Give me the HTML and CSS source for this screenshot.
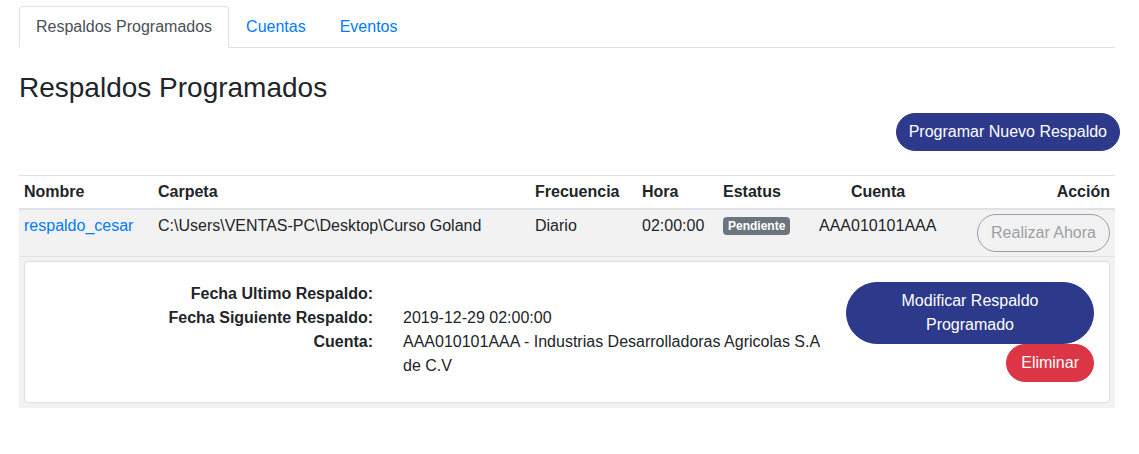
FILE: index.html
```html
<!DOCTYPE html>
<html lang="es">
<head>
<meta charset="utf-8">
<title>Respaldos Programados</title>
<link rel="stylesheet" href="styles.css">
</head>
<body>
<div class="page">
  <ul class="tabs">
    <li><a class="tab active" href="#">Respaldos Programados</a></li>
    <li><a class="tab" href="#">Cuentas</a></li>
    <li><a class="tab" href="#">Eventos</a></li>
  </ul>

  <h3 class="title">Respaldos Programados</h3>

  <div class="toolbar">
    <button class="btn btn-primary btn-new">Programar Nuevo Respaldo</button>
  </div>

  <table class="table">
    <colgroup>
      <col class="c1"><col class="c2"><col class="c3"><col class="c4"><col class="c5"><col class="c6"><col class="c7">
    </colgroup>
    <thead>
      <tr>
        <th>Nombre</th>
        <th>Carpeta</th>
        <th>Frecuencia</th>
        <th>Hora</th>
        <th>Estatus</th>
        <th class="center">Cuenta</th>
        <th class="right">Acción</th>
      </tr>
    </thead>
    <tbody>
      <tr class="striped">
        <td><a class="link" href="#">respaldo_cesar</a></td>
        <td>C:\Users\VENTAS-PC\Desktop\Curso Goland</td>
        <td>Diario</td>
        <td>02:00:00</td>
        <td><span class="badge">Pendiente</span></td>
        <td>AAA010101AAA</td>
        <td class="right"><button class="btn btn-outline" disabled>Realizar Ahora</button></td>
      </tr>
      <tr class="detail">
        <td colspan="7">
          <div class="card">
            <div class="labels">
              <div>Fecha Ultimo Respaldo:</div>
              <div>Fecha Siguiente Respaldo:</div>
              <div>Cuenta:</div>
            </div>
            <div class="values">
              <div class="empty"></div>
              <div>2019-12-29 02:00:00</div>
              <div>AAA010101AAA - Industrias Desarrolladoras Agricolas S.A de C.V</div>
            </div>
            <div class="actions">
              <button class="btn btn-primary btn-block">Modificar Respaldo Programado</button>
              <button class="btn btn-danger">Eliminar</button>
            </div>
          </div>
        </td>
      </tr>
    </tbody>
  </table>
</div>
</body>
</html>
```

FILE: styles.css
```css
* { box-sizing: border-box; }

html, body {
  margin: 0;
  padding: 0;
  background: #fff;
}

body {
  font-family: "Liberation Sans", Arial, sans-serif;
  font-size: 16px;
  line-height: 24px;
  color: #212529;
}

.page {
  padding: 6px 24px 0 19px;
}

.tabs {
  list-style: none;
  margin: 0;
  padding: 0;
  display: flex;
  border-bottom: 1px solid #dee2e6;
}

.tabs li {
  margin-bottom: -1px;
}

.tab {
  display: block;
  padding: 8px 16px;
  border: 1px solid transparent;
  border-top-left-radius: 4px;
  border-top-right-radius: 4px;
  color: #007bff;
  text-decoration: none;
}

.tab.active {
  color: #495057;
  background: #fff;
  border-color: #dee2e6 #dee2e6 #fff;
}

.title {
  margin: 23px 0 8px;
  font-size: 28px;
  font-weight: 500;
  line-height: 1.2;
}

.toolbar {
  display: flex;
  justify-content: flex-end;
  margin-right: -5px;
}

.btn {
  font-family: inherit;
  font-size: 16px;
  line-height: 24px;
  padding: 6px 12px;
  border: 1px solid transparent;
  border-radius: 50px;
  cursor: pointer;
  display: inline-block;
  text-align: center;
}

.btn-primary {
  background: #2d3a8c;
  border-color: #2d3a8c;
  color: #fff;
}

.btn-danger {
  background: #dc3545;
  border-color: #dc3545;
  color: #fff;
  padding-left: 14px;
  padding-right: 14px;
}

.btn-outline {
  background: transparent;
  border-color: #6c757d;
  color: #6c757d;
  opacity: 0.65;
  padding-left: 13px;
  padding-right: 13px;
}

.btn-block {
  display: block;
  width: 100%;
}

.table {
  width: 100%;
  margin-top: 24px;
  border-collapse: collapse;
  table-layout: fixed;
}

.c1 { width: 134px; }
.c2 { width: 377px; }
.c3 { width: 107px; }
.c4 { width: 81px; }
.c5 { width: 96px; }
.c6 { width: 128px; }
.c7 { width: 173px; }

.table th,
.table td {
  padding: 4px 5px;
  text-align: left;
  vertical-align: top;
  border-top: 1px solid #dee2e6;
}

.table th {
  font-weight: bold;
  border-bottom: 2px solid #dee2e6;
}

.table thead th {
  vertical-align: bottom;
}

.table th.center { text-align: center; }
.table .right { text-align: right; }

.striped td {
  background: #f2f2f2;
}

.link {
  color: #007bff;
  text-decoration: none;
}

.badge {
  display: inline-block;
  padding: 3px 5px;
  font-size: 12px;
  font-weight: bold;
  line-height: 1;
  color: #fff;
  background: #6c757d;
  border-radius: 4px;
  vertical-align: 1px;
}

.detail td {
  background: #f2f2f2;
  padding: 4px 5px 5px;
}

.card {
  background: #fff;
  border: 1px solid rgba(0, 0, 0, 0.125);
  border-radius: 4px;
  display: grid;
  grid-template-columns: 348px 458px 263px;
  padding: 20px 15px 20px 0;
}

.labels {
  text-align: right;
  font-weight: bold;
}

.values {
  padding-left: 30px;
}

.values .empty {
  height: 24px;
}

.actions {
  padding-left: 15px;
  display: flex;
  flex-direction: column;
  align-items: flex-end;
}
```
